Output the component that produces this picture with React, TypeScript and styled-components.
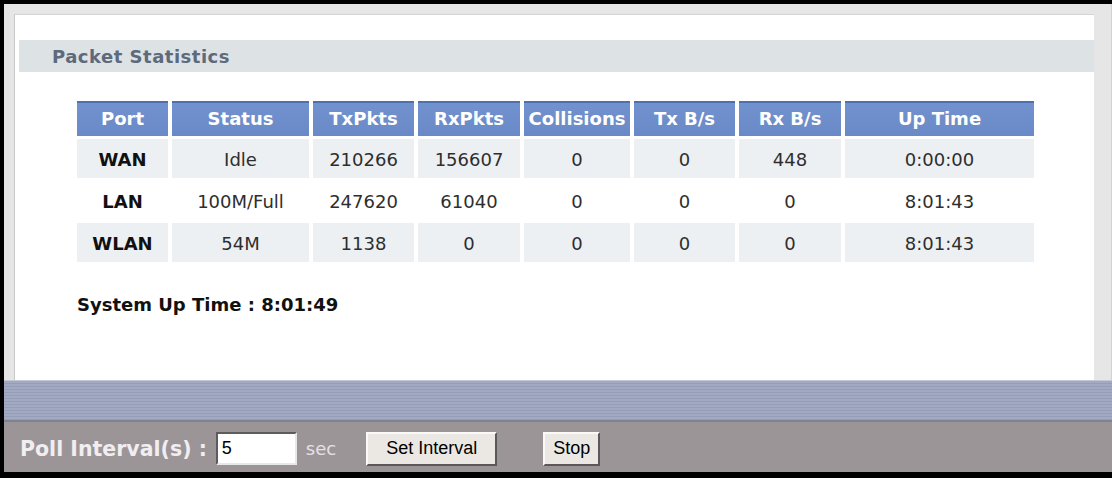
import React from "react";
import styled, { createGlobalStyle } from "styled-components";

const GlobalStyle = createGlobalStyle`
  html, body {
    margin: 0;
    padding: 0;
    background: #ffffff;
  }
  * {
    box-sizing: border-box;
  }
`;

const Screen = styled.div`
  width: 1112px;
  height: 478px;
  border-top: 4px solid #000;
  border-left: 4px solid #000;
  border-bottom: 6px solid #000;
  display: flex;
  flex-direction: column;
  font-family: "DejaVu Sans", Verdana, sans-serif;
`;

const Frame = styled.div`
  background: #e6e6e6;
  padding: 10px 17px 0 10px;
  border-right: 1px solid #d2d2d2;
`;

const Panel = styled.div`
  height: 366px;
  background: #ffffff;
  border-left: 1px solid #c9c9c9;
  border-top: 1px solid #d4d4d4;
  padding-top: 25px;
  padding-left: 4px;
`;

const SectionBar = styled.div`
  height: 32px;
  background: #dde2e5;
  display: flex;
  align-items: center;
  padding-left: 33px;
  font-size: 18px;
  font-weight: bold;
  letter-spacing: 0.5px;
  color: #5d6a7b;
`;

const Content = styled.div`
  padding-left: 58px;
  padding-top: 29px;
`;

const Grid = styled.div`
  display: grid;
  grid-template-columns: 91px 137px 101px 102px 106px 101px 102px 189px;
  grid-template-rows: 35px repeat(3, 39px);
  column-gap: 4px;
  row-gap: 3px;
`;

const HeadCell = styled.div`
  display: flex;
  align-items: center;
  justify-content: center;
  background: linear-gradient(
    #4f70b0 0,
    #4f70b0 2px,
    #7292cf 2px,
    #6989c7 100%
  );
  color: #ffffff;
  font-size: 18px;
  font-weight: bold;
  white-space: nowrap;
`;

const Cell = styled.div<{ $shade: boolean; $bold?: boolean }>`
  display: flex;
  align-items: center;
  justify-content: center;
  padding-top: 2px;
  background: ${(p) => (p.$shade ? "#edf0f3" : "#ffffff")};
  color: ${(p) => (p.$bold ? "#111111" : "#2e2e2e")};
  font-weight: ${(p) => (p.$bold ? "bold" : "normal")};
  font-size: 18px;
  white-space: nowrap;
`;

const UpTime = styled.div`
  margin-top: 32px;
  font-size: 18px;
  line-height: 22px;
  font-weight: bold;
  color: #111111;
`;

const Stripes = styled.div`
  height: 42px;
  border-top: 1px solid #c4c8d4;
  border-bottom: 2px solid #7e8394;
  background: repeating-linear-gradient(
    to bottom,
    #a2aac3 0,
    #a2aac3 2px,
    #959db7 2px,
    #959db7 3px
  );
`;

const ControlBar = styled.div`
  flex: 1;
  background: #9c9598;
  display: flex;
  align-items: center;
  padding: 3px 0 0 16px;
`;

const Label = styled.span`
  font-size: 20.5px;
  font-weight: bold;
  color: #f0eef0;
  white-space: nowrap;
`;

const IntervalInput = styled.input`
  width: 81px;
  height: 33px;
  margin-left: 9px;
  padding: 0 0 0 4px;
  font-family: "Liberation Sans", Arial, sans-serif;
  font-size: 18px;
  color: #000;
  background: #ffffff;
  border-top: 2px solid #5c5c5c;
  border-left: 2px solid #5c5c5c;
  border-right: 2px solid #e8e8e8;
  border-bottom: 2px solid #e8e8e8;
  outline: none;
`;

const Unit = styled.span`
  margin-left: 9px;
  font-size: 18px;
  color: #e4e0e3;
`;

const Button = styled.button<{ $width: number; $gap: number }>`
  width: ${(p) => p.$width}px;
  height: 34px;
  margin-left: ${(p) => p.$gap}px;
  padding: 0;
  font-family: "Liberation Sans", Arial, sans-serif;
  font-size: 18px;
  color: #000;
  background: #ebe8e3;
  border-top: 2px solid #faf9f7;
  border-left: 2px solid #faf9f7;
  border-right: 2px solid #5a5858;
  border-bottom: 2px solid #5a5858;
`;

const headers = [
  "Port",
  "Status",
  "TxPkts",
  "RxPkts",
  "Collisions",
  "Tx B/s",
  "Rx B/s",
  "Up Time",
];

const rows = [
  ["WAN", "Idle", "210266", "156607", "0", "0", "448", "0:00:00"],
  ["LAN", "100M/Full", "247620", "61040", "0", "0", "0", "8:01:43"],
  ["WLAN", "54M", "1138", "0", "0", "0", "0", "8:01:43"],
];

function App() {
  return (
    <>
      <GlobalStyle />
      <Screen>
        <Frame>
          <Panel>
            <SectionBar>Packet Statistics</SectionBar>
            <Content>
              <Grid>
                {headers.map((h) => (
                  <HeadCell key={h}>{h}</HeadCell>
                ))}
                {rows.map((row, r) =>
                  row.map((value, c) => (
                    <Cell key={`${r}-${c}`} $shade={r !== 1} $bold={c === 0}>
                      {value}
                    </Cell>
                  ))
                )}
              </Grid>
              <UpTime>System Up Time : 8:01:49</UpTime>
            </Content>
          </Panel>
        </Frame>
        <Stripes />
        <ControlBar>
          <Label>Poll Interval(s) :</Label>
          <IntervalInput defaultValue="5" />
          <Unit>sec</Unit>
          <Button $width={131} $gap={30}>
            Set Interval
          </Button>
          <Button $width={57} $gap={46}>
            Stop
          </Button>
        </ControlBar>
      </Screen>
    </>
  );
}

export default App;
